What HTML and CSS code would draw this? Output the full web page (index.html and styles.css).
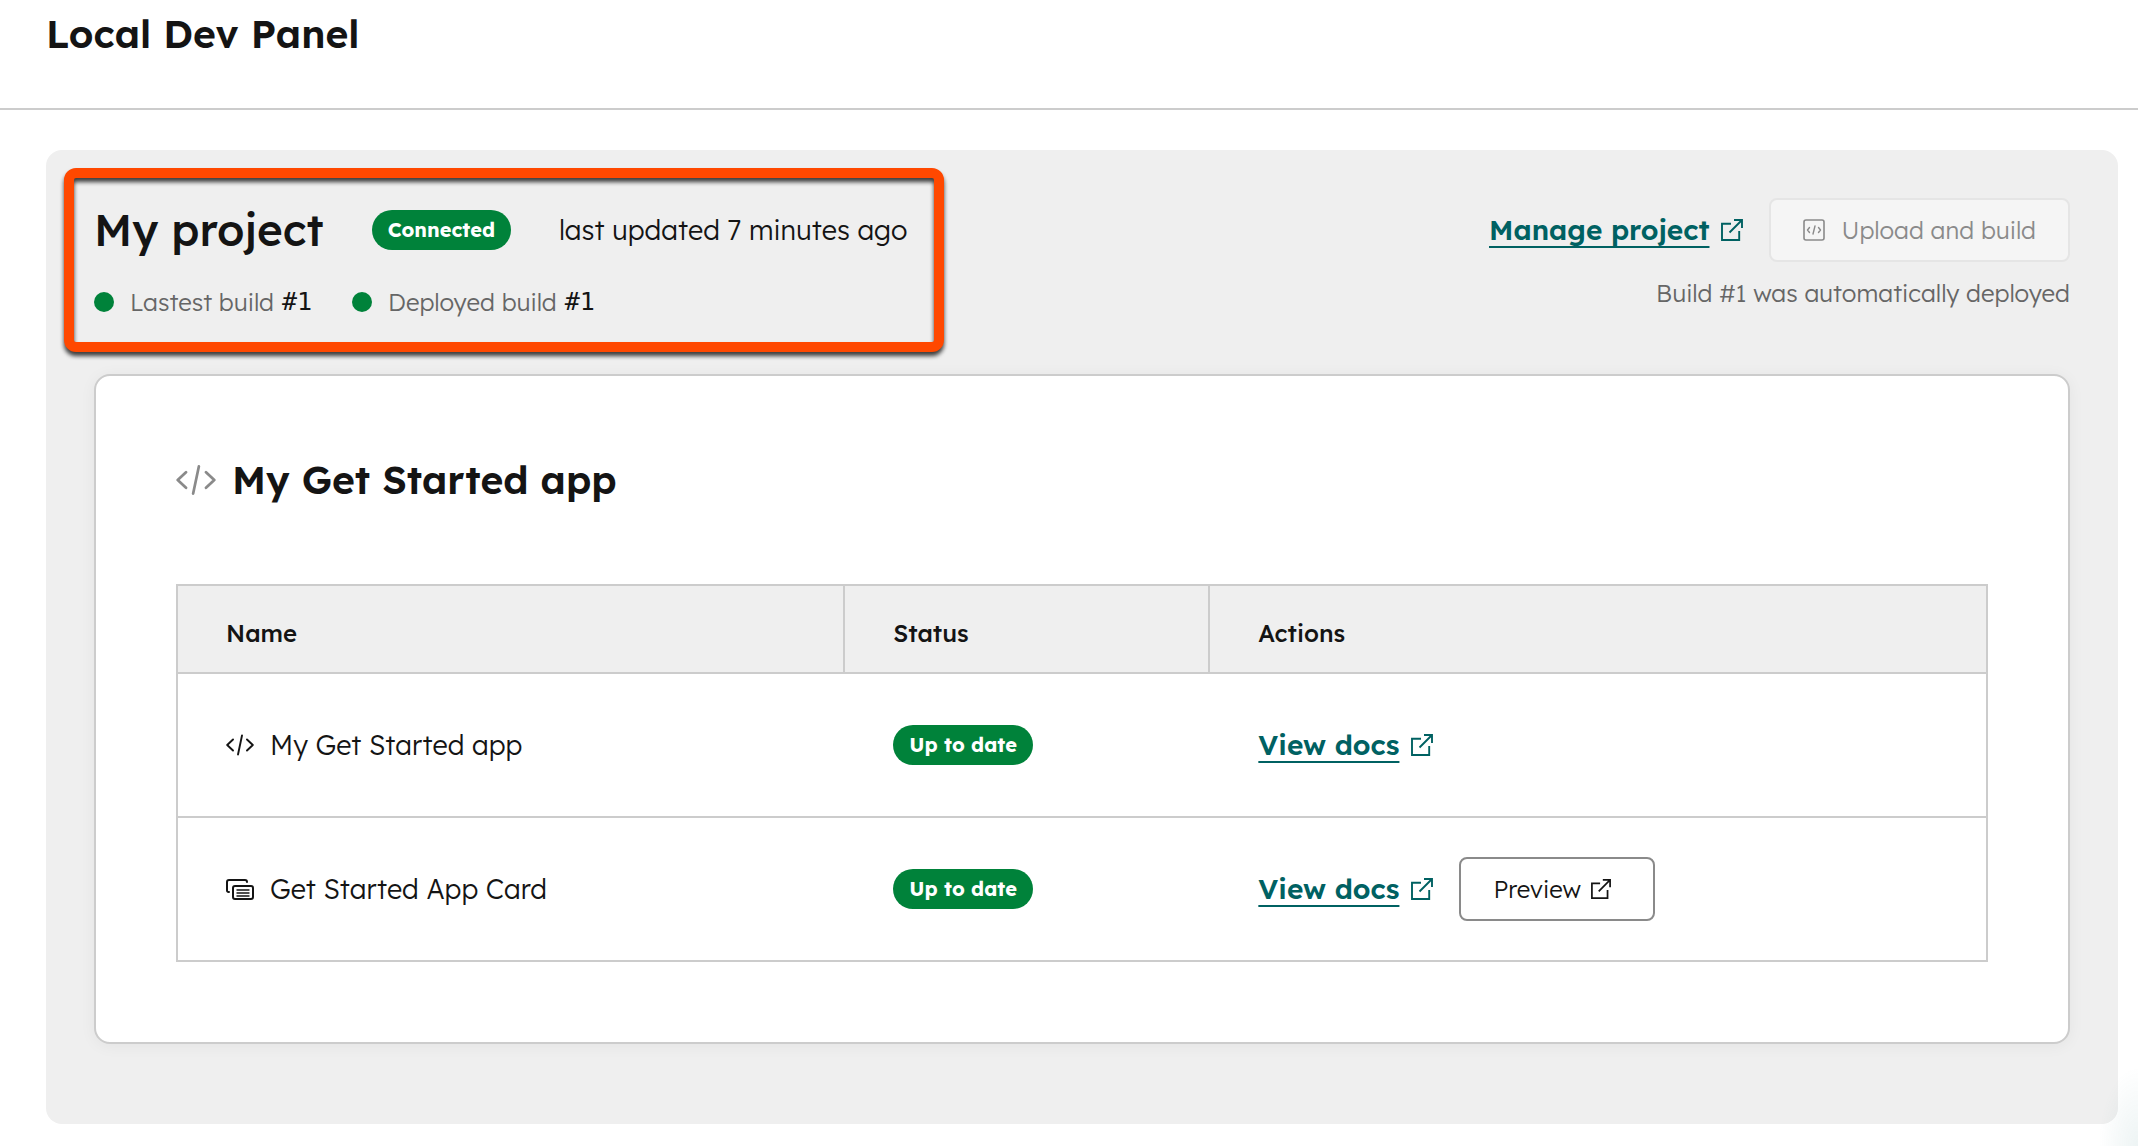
FILE: index.html
```html
<!DOCTYPE html>
<html lang="en">
<head>
  <meta charset="utf-8">
  <meta name="viewport" content="width=device-width, initial-scale=1">
  <title>Local Dev Panel</title>
  <link rel="stylesheet" href="styles.css">
</head>
<body>
  <svg class="symbols" aria-hidden="true">
    <symbol id="icon-code" viewBox="0 0 28 22">
      <path d="M7 5.500 1.200 11l5.800 5.500M21 5.500 26.800 11 21 16.500M16 1.500 12 20.500" fill="none" stroke="currentColor" stroke-width="1.900" stroke-linecap="round" stroke-linejoin="round"/>
    </symbol>
    <symbol id="icon-external" viewBox="0 0 22 22">
      <path d="M10 4.800H1v16.200h17.200v-9M8.500 13.500 21 1M13 1h8v8" fill="none" stroke="currentColor" stroke-width="1.900"/>
    </symbol>
    <symbol id="icon-file-code" viewBox="0 0 22 22">
      <rect x="1" y="1" width="20" height="20" rx="2" fill="none" stroke="currentColor" stroke-width="1.600"/>
      <path d="M6.500 8.500 4.500 11l2 2.500M15.500 8.500l2 2.500-2 2.500M12 7l-2 8" fill="none" stroke="currentColor" stroke-width="1.400" stroke-linecap="round" stroke-linejoin="round"/>
    </symbol>
    <symbol id="icon-cards" viewBox="0 0 28 22">
      <path d="M3 14H2.500A1.500 1.500 0 0 1 1 12.500V4a2 2 0 0 1 2-2h16a2 2 0 0 1 2 2" fill="none" stroke="currentColor" stroke-width="2" stroke-linecap="round"/>
      <rect x="7" y="8" width="20" height="13" rx="2" fill="none" stroke="currentColor" stroke-width="2"/>
      <path d="M11 12h12M11 15h12M11 18h12" stroke="currentColor" stroke-width="1.400" stroke-linecap="round"/>
    </symbol>
  </svg>

  <header class="page-header">
    <h1 class="page-title">Local Dev Panel</h1>
  </header>

  <main class="page-main">
    <section class="panel">
      <div class="project">
        <div class="summary">
          <div class="summary-top">
            <h2 class="project-name">My project</h2>
            <span class="badge">Connected</span>
            <span class="updated">last updated 7 minutes ago</span>
          </div>
          <div class="builds">
            <span class="build"><span class="dot"></span><span>Lastest build</span><span class="build-number">#1</span></span>
            <span class="build"><span class="dot"></span><span>Deployed build</span><span class="build-number">#1</span></span>
          </div>
        </div>
        <div class="project-actions">
          <div class="action-row">
            <a class="link" href="#"><span class="link-text">Manage project</span><svg class="icon-link"><use href="#icon-external"/></svg></a>
            <button class="button" type="button" disabled><svg class="icon-link"><use href="#icon-file-code"/></svg>Upload and build</button>
          </div>
          <p class="deploy-note">Build #1 was automatically deployed</p>
        </div>
      </div>

      <article class="card">
        <h2 class="card-title"><svg class="icon-title"><use href="#icon-code"/></svg>My Get Started app</h2>
        <table class="components">
          <thead>
            <tr>
              <th class="col-name" scope="col">Name</th>
              <th class="col-status" scope="col">Status</th>
              <th scope="col">Actions</th>
            </tr>
          </thead>
          <tbody>
            <tr>
              <td><div class="cell"><svg class="icon-row"><use href="#icon-code"/></svg>My Get Started app</div></td>
              <td><div class="cell"><span class="badge">Up to date</span></div></td>
              <td><div class="cell cell-actions"><a class="link" href="#"><span class="link-text">View docs</span><svg class="icon-link"><use href="#icon-external"/></svg></a></div></td>
            </tr>
            <tr>
              <td><div class="cell"><svg class="icon-row"><use href="#icon-cards"/></svg>Get Started App Card</div></td>
              <td><div class="cell"><span class="badge">Up to date</span></div></td>
              <td><div class="cell cell-actions"><a class="link" href="#"><span class="link-text">View docs</span><svg class="icon-link"><use href="#icon-external"/></svg></a>
                <button class="button button-preview" type="button">Preview<svg class="icon-preview"><use href="#icon-external"/></svg></button></div></td>
            </tr>
          </tbody>
        </table>
      </article>
    </section>
  </main>
  <div class="corner-glow"></div>
</body>
</html>
```
FILE: styles.css
```css
* {
  box-sizing: border-box;
}

body {
  margin: 0;
  background: #fff;
  color: #141414;
  font-family: "Lexend Deca", Lexend, Inter, "Open Sans", sans-serif;
  font-size: 27px;
  font-weight: 300;
  line-height: 40px;
}

h1,
h2,
p {
  margin: 0;
}

.symbols {
  display: none;
}

svg {
  flex: none;
}

.page-header {
  padding: 10px 46px 50px;
  border-bottom: 2px solid #ccc;
}

.page-title,
.card-title {
  font-size: 39px;
  font-weight: 600;
  line-height: 48px;
}

.page-main {
  padding: 40px 20px 22px 46px;
}

.panel {
  padding: 48px 48px 80px;
  border-radius: 16px;
  background: #efefef;
}

.project {
  display: flex;
  justify-content: space-between;
  align-items: flex-start;
  margin-bottom: 56px;
}

.summary {
  position: relative;
  display: flex;
  flex-direction: column;
  gap: 24px;
}

/* Callout frame drawn over the project summary */
.summary::after {
  content: "";
  position: absolute;
  inset: -30px -36px -34px -30px;
  border: 10px solid #ff4800;
  border-radius: 12px;
  filter: drop-shadow(0 4px 2px rgba(0, 0, 0, 0.75));
  pointer-events: none;
}

.summary-top {
  display: flex;
  align-items: center;
  gap: 48px;
  height: 64px;
}

.project-name {
  font-size: 44px;
  font-weight: 500;
  line-height: 64px;
}

.badge {
  padding: 0 16px;
  border-radius: 20px;
  background: #00823a;
  color: #fff;
  font-size: 20px;
  font-weight: 700;
}

.builds {
  display: flex;
  gap: 40px;
  color: #666;
  font-size: 24px;
  line-height: 32px;
}

.build {
  display: flex;
  align-items: center;
}

.dot {
  width: 20px;
  height: 20px;
  margin-right: 16px;
  border-radius: 50%;
  background: #00823a;
}

.build-number {
  margin-left: 8px;
  color: #141414;
  font-family: "DejaVu Sans Mono", monospace;
  font-size: 25px;
}

.project-actions {
  display: flex;
  flex-direction: column;
  align-items: flex-end;
  gap: 16px;
}

.action-row {
  display: flex;
  align-items: center;
  gap: 26px;
}

.deploy-note {
  color: #666;
  font-size: 24px;
  line-height: 30px;
}

.link {
  display: inline-flex;
  align-items: center;
  gap: 12px;
  color: #006162;
  font-size: 28px;
  font-weight: 600;
  text-decoration: none;
}

.link-text {
  text-decoration: underline 2px;
  text-decoration-skip-ink: none;
  text-underline-offset: 6px;
}

.icon-link {
  width: 22px;
  height: 22px;
}

.button {
  display: inline-flex;
  align-items: center;
  gap: 16px;
  height: 64px;
  padding: 0 32px;
  border: 2px solid #e5e5e5;
  border-radius: 8px;
  background: #f5f5f5;
  color: #8a8a8a;
  font: inherit;
  font-size: 24px;
}

.button-preview {
  gap: 10px;
  padding-right: 42px;
  border-color: #8a8a8a;
  background: #fff;
  color: #141414;
}

.icon-preview {
  width: 20px;
  height: 20px;
}

.card {
  padding: 80px;
  border: 2px solid #ccc;
  border-radius: 16px;
  background: #fff;
  box-shadow: 0 2px 16px rgba(0, 0, 0, 0.05);
}

.card-title {
  display: flex;
  align-items: center;
  gap: 16px;
  margin-bottom: 80px;
}

.icon-title {
  width: 40px;
  height: 32px;
  color: #8a8a8a;
}

.components {
  width: 100%;
  border: 2px solid #ccc;
  border-spacing: 0;
  table-layout: fixed;
}

.col-name {
  width: 36.9%;
}

.col-status {
  width: 20.2%;
}

th {
  padding: 27px 48px 19px;
  border-right: 2px solid #ccc;
  border-bottom: 2px solid #ccc;
  background: #efefef;
  font-size: 24px;
  font-weight: 500;
  text-align: left;
}

th:last-child {
  border-right: 0;
}

td {
  height: 142px;
  padding: 0 48px;
}

tbody tr:first-child td {
  height: 144px;
  border-bottom: 2px solid #ccc;
}

.cell {
  display: flex;
  align-items: center;
  gap: 16px;
}

.cell-actions {
  gap: 26px;
}

.icon-row {
  width: 28px;
  height: 22px;
}

.corner-glow {
  position: fixed;
  right: 0;
  bottom: 0;
  width: 40px;
  height: 80px;
  background: radial-gradient(ellipse at 100% 100%, rgba(0, 97, 98, 0.07), rgba(0, 97, 98, 0) 70%);
  pointer-events: none;
}
```
